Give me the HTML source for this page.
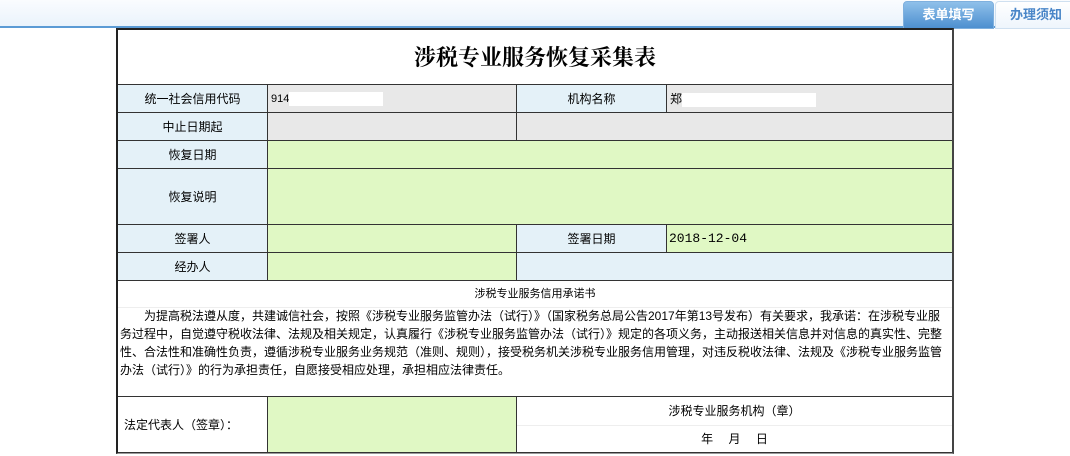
<!DOCTYPE html><html><head><meta charset="utf-8"><style>
body{margin:0;width:1070px;height:456px;overflow:hidden;background:#fff;font-family:"Liberation Sans","Noto Sans CJK SC",sans-serif;font-size:12px;color:#000;position:relative}
.bar{position:absolute;left:0;top:0;width:1070px;height:26px;background:linear-gradient(#fafcfe,#eaf3fc);border-bottom:2px solid #5b9bd5}
.tab{position:absolute;top:1px;height:26px;line-height:26px;text-align:center;font-weight:bold;font-size:13px;border-radius:4px 4px 0 0}
.t1{left:903px;width:89px;background:linear-gradient(#8fc0ea,#4d8fd0);color:#fff;border:1px solid #7fb0de}
.t2{left:995px;width:80px;background:linear-gradient(#fff,#eef5fc);color:#4a86c8;border:1px solid #cfe0f0}
.box{position:absolute;left:116px;top:28px;width:834px;height:423px;border:2px solid #222;border-bottom:1px solid #999;border-right:2px solid #444}
.c{position:absolute;box-sizing:border-box;border-right:1px solid #333;border-bottom:1px solid #333}
.lb{background:#e4f1f8;text-align:center}
.gr{background:#e8e8e8}
.gn{background:#e0f8c4}
</style></head><body>
<div class="bar"></div>
<div class="tab t1">表单填写</div><div class="tab t2">办理须知</div>
<div class="box">
<div class="c" style="left:0;top:0;width:834px;height:55px;text-align:center;line-height:54px;font-size:22px;font-family:'Noto Serif CJK SC','Noto Sans CJK SC',serif;font-weight:bold;border-right:none">涉税专业服务恢复采集表</div>
<div class="c lb" style="left:0;top:55px;width:150px;height:28px;line-height:28px">统一社会信用代码</div>
<div class="c gr" style="left:150px;top:55px;width:249px;height:28px;line-height:28px;padding-left:3px;font-size:11px">914<span style="display:inline-block;width:94px;height:14px;background:#fff;vertical-align:middle"></span></div>
<div class="c lb" style="left:399px;top:55px;width:150px;height:28px;line-height:28px">机构名称</div>
<div class="c gr" style="left:549px;top:55px;width:285px;height:28px;line-height:28px;padding-left:3px;border-right:none">郑<span style="display:inline-block;width:134px;height:14px;background:#fff;vertical-align:middle"></span></div>
<div class="c lb" style="left:0;top:83px;width:150px;height:28px;line-height:28px">中止日期起</div>
<div class="c gr" style="left:150px;top:83px;width:249px;height:28px"></div>
<div class="c gr" style="left:399px;top:83px;width:435px;height:28px;border-right:none"></div>
<div class="c lb" style="left:0;top:111px;width:150px;height:28px;line-height:28px">恢复日期</div>
<div class="c gn" style="left:150px;top:111px;width:684px;height:28px;border-right:none"></div>
<div class="c lb" style="left:0;top:139px;width:150px;height:56px;line-height:56px">恢复说明</div>
<div class="c gn" style="left:150px;top:139px;width:684px;height:56px;border-right:none"></div>
<div class="c lb" style="left:0;top:195px;width:150px;height:28px;line-height:28px">签署人</div>
<div class="c gn" style="left:150px;top:195px;width:249px;height:28px"></div>
<div class="c lb" style="left:399px;top:195px;width:150px;height:28px;line-height:28px">签署日期</div>
<div class="c gn" style="left:549px;top:195px;width:285px;height:28px;line-height:28px;padding-left:2px;font-family:'Liberation Mono',monospace;font-size:13px;border-right:none">2018-12-04</div>
<div class="c lb" style="left:0;top:223px;width:150px;height:28px;line-height:28px">经办人</div>
<div class="c gn" style="left:150px;top:223px;width:249px;height:28px"></div>
<div class="c lb" style="left:399px;top:223px;width:435px;height:28px;border-right:none"></div>
<div style="position:absolute;left:0;top:251px;width:834px;height:26px;line-height:26px;text-align:center;font-size:11px;border-bottom:1px solid #eee">涉税专业服务信用承诺书</div>
<div class="c" style="left:0;top:277px;width:834px;height:90px;padding:0 2px;line-height:18px;border-right:none">　　为提高税法遵从度，共建诚信社会，按照《涉税专业服务监管办法（试行）》（国家税务总局公告2017年第13号发布）有关要求，我承诺：在涉税专业服务过程中，自觉遵守税收法律、法规及相关规定，认真履行《涉税专业服务监管办法（试行）》规定的各项义务，主动报送相关信息并对信息的真实性、完整性、合法性和准确性负责，遵循涉税专业服务业务规范（准则、规则），接受税务机关涉税专业服务信用管理，对违反税收法律、法规及《涉税专业服务监管办法（试行）》的行为承担责任，自愿接受相应处理，承担相应法律责任。</div>
<div class="c" style="left:0;top:367px;width:150px;height:56px;line-height:56px;padding-left:6px">法定代表人（签章）：</div>
<div class="c gn" style="left:150px;top:367px;width:249px;height:56px"></div>
<div style="position:absolute;left:399px;top:367px;width:435px;height:28px;line-height:28px;text-align:center;border-bottom:1px solid #eee">涉税专业服务机构（章）</div>
<div class="c" style="left:399px;top:395px;width:435px;height:28px;line-height:28px;text-align:center;border-right:none">年　 月　 日</div>
</div>
</body></html>
